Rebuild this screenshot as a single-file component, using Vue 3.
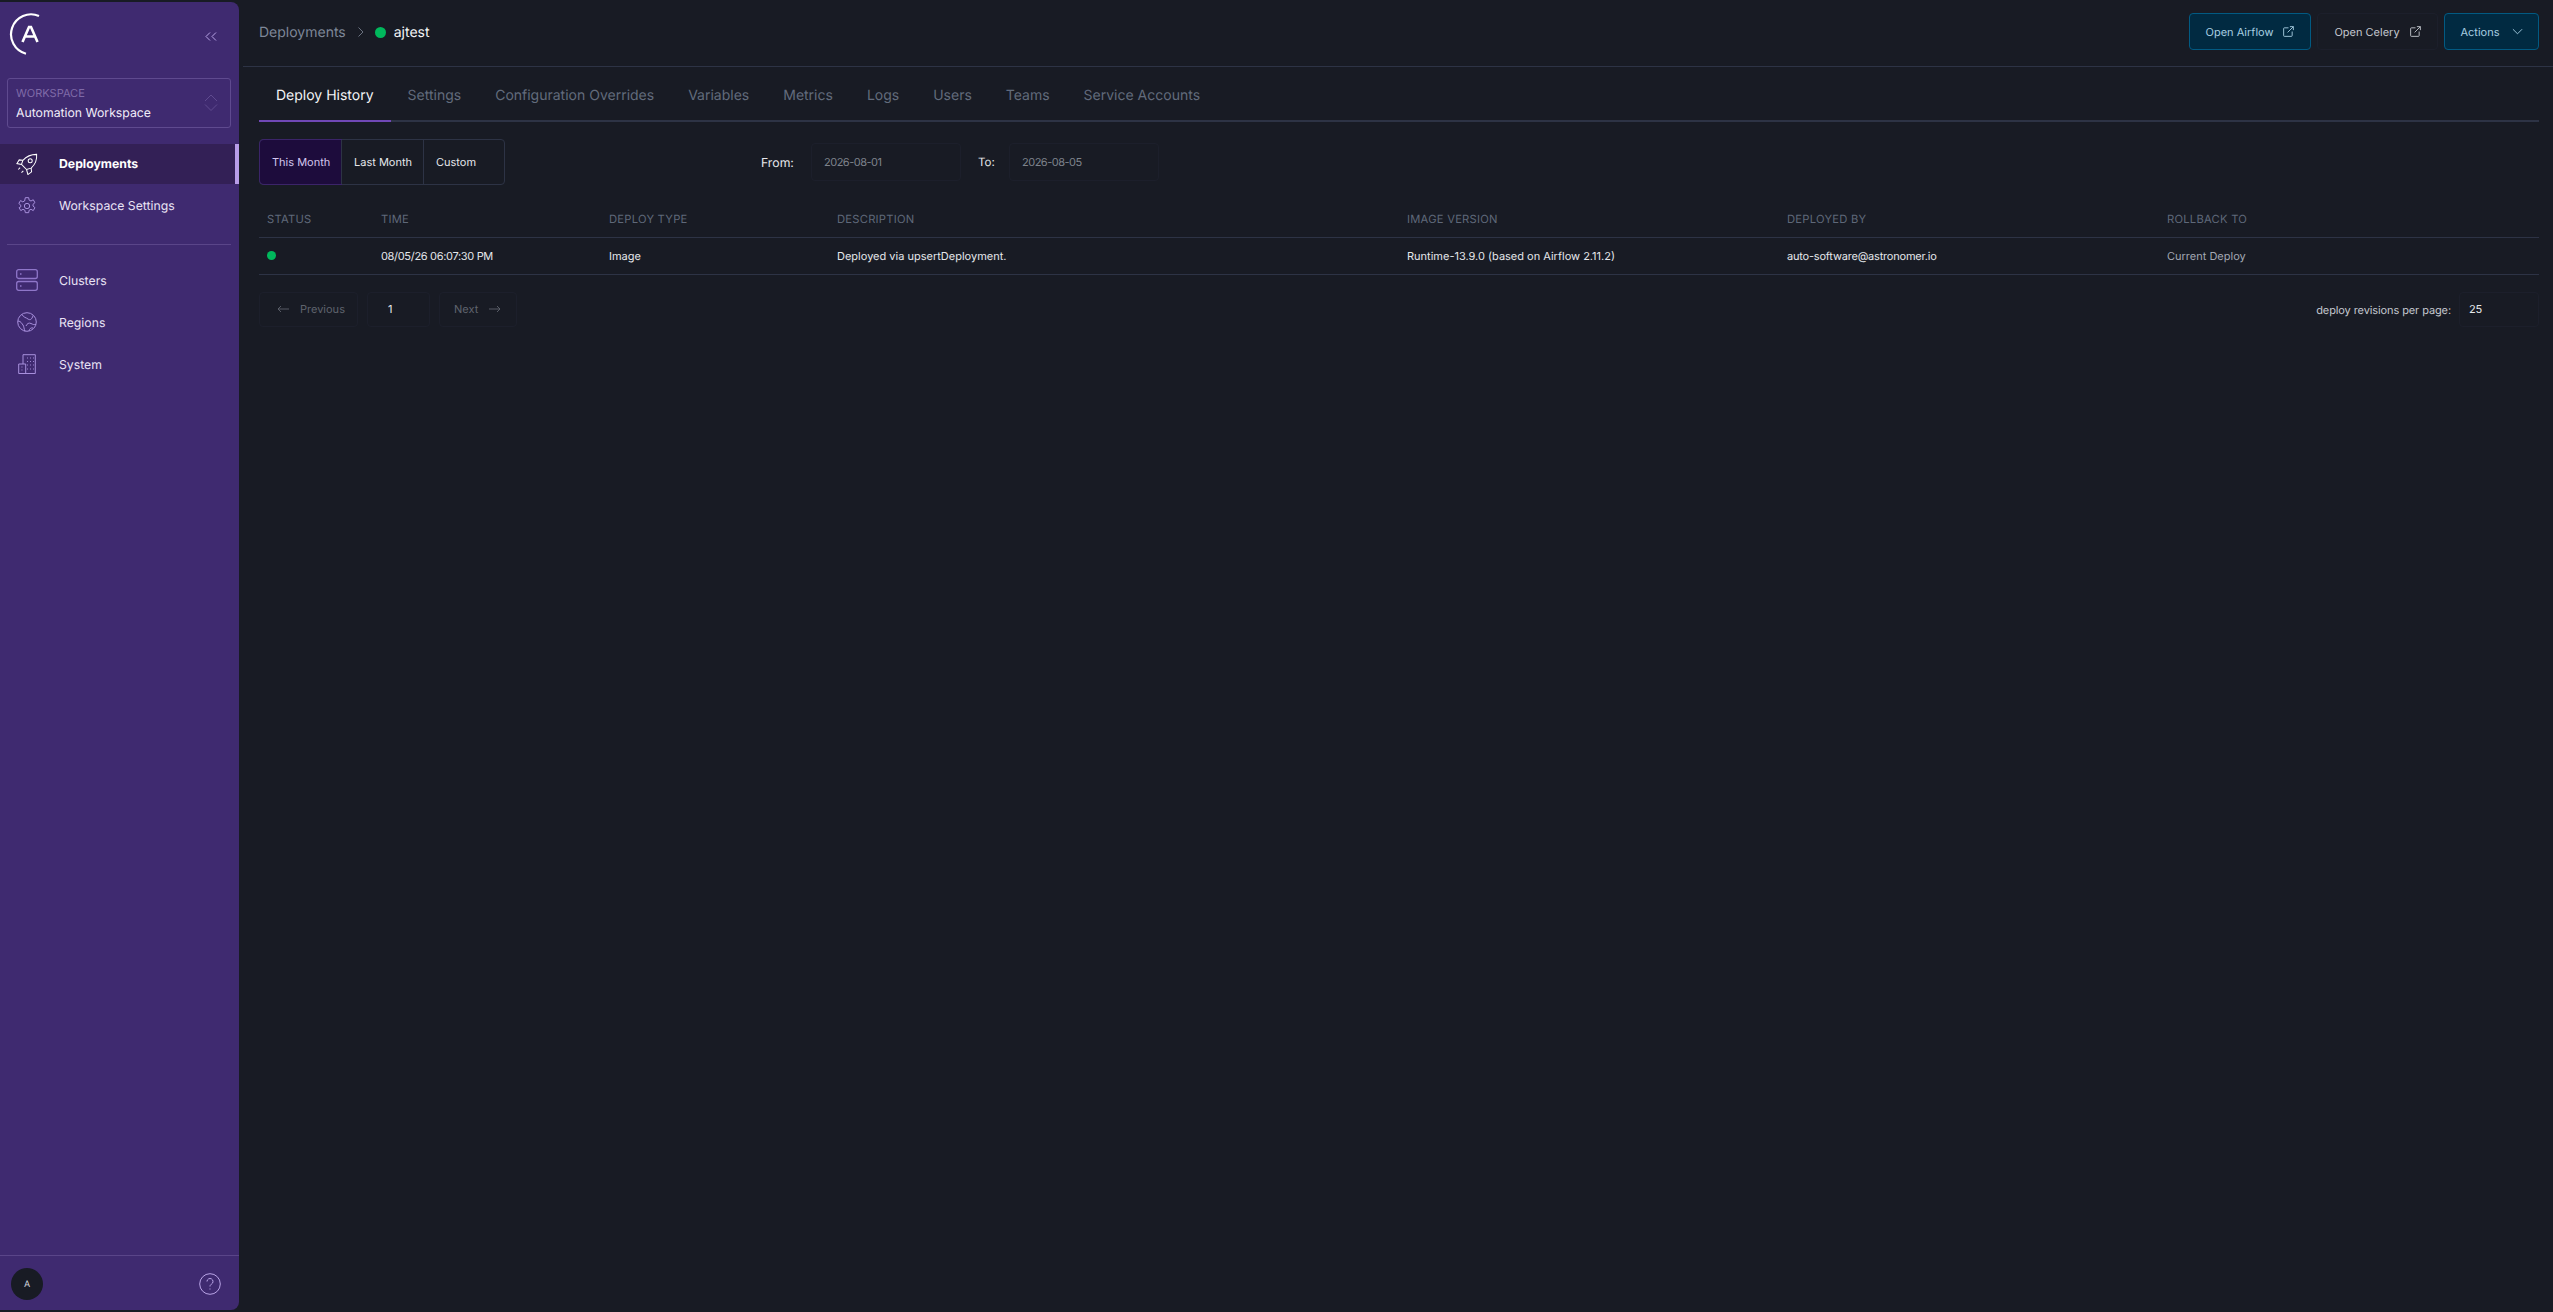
<script setup>
const nav1 = [
  { label: 'Deployments', icon: 'rocket', active: true },
  { label: 'Workspace Settings', icon: 'gear' },
]
const nav2 = [
  { label: 'Clusters', icon: 'server' },
  { label: 'Regions', icon: 'globe' },
  { label: 'System', icon: 'building' },
]
const tabs = ['Deploy History', 'Settings', 'Configuration Overrides', 'Variables', 'Metrics', 'Logs', 'Users', 'Teams', 'Service Accounts']
const headers = ['STATUS', 'TIME', 'DEPLOY TYPE', 'DESCRIPTION', 'IMAGE VERSION', 'DEPLOYED BY', 'ROLLBACK TO']
</script>

<template>
  <div class="page">
    <aside class="sidebar">
      <div class="brand">
        <svg class="logo" viewBox="0 0 34 46" width="34" height="46">
          <path d="M30 4A20 20 0 1 0 17 41.700" fill="none" stroke="#fff" stroke-width="2.200" />
          <path d="M13.500 30 20 15h2L28.500 30M16 24.500h10" fill="none" stroke="#fff" stroke-width="2.600" />
        </svg>
        <svg class="collapse" viewBox="0 0 12 9" width="12" height="9">
          <path d="M5 .5 1 4.500 5 8.500M11 .5 7 4.500 11 8.500" fill="none" stroke="#b9a4e6" stroke-width="1" />
        </svg>
      </div>
      <div class="workspace">
        <div>
          <div class="ws-label">WORKSPACE</div>
          <div class="ws-name">Automation Workspace</div>
        </div>
        <svg viewBox="0 0 14 18" width="14" height="18">
          <path d="M1 7 7 1l6 6M1 10.500l6 6 6-6" fill="none" stroke="#5f4a8f" stroke-width="1" />
        </svg>
      </div>
      <nav class="nav first">
        <a v-for="n in nav1" :key="n.label" class="nav-item" :class="{ active: n.active }">
          <span class="nav-icon">
            <svg v-if="n.icon === 'rocket'" viewBox="0 0 24 24" width="22" height="22" fill="none" stroke="#fff" stroke-width="1.100">
              <path d="M7.500 8C11.500 3.500 17 1.500 22.500 1.500c.5 5.500-1.500 11-6 15L11.500 18 6 12.500z" />
              <circle cx="15.500" cy="8.500" r="2.200" />
              <path d="M7.500 8 3.500 7.500 1 11.500l5 1M16.500 16.500 17 20.500l-4 3-1.500-5.500M4.500 16 2.500 18M8 19.500l-2 2" />
            </svg>
            <svg v-else viewBox="0 0 24 24" width="20" height="20" fill="none" stroke="#a78fdc" stroke-width="1.200">
              <circle cx="12" cy="12" r="3.200" />
              <path d="M10 2h4l.6 3 2.200 1 2.700-1.500 2 3.500-2.300 2v2l2.300 2-2 3.500-2.700-1.500-2.200 1-.6 3h-4l-.6-3-2.200-1-2.700 1.500-2-3.500L4.500 13v-2L2.200 9l2-3.500L6.900 7l2.200-1z" stroke-linejoin="round" />
            </svg>
          </span>
          {{ n.label }}
        </a>
      </nav>
      <hr class="divider" />
      <nav class="nav">
        <a v-for="n in nav2" :key="n.label" class="nav-item">
          <span class="nav-icon">
            <svg v-if="n.icon === 'server'" viewBox="0 0 22 22" width="22" height="22" fill="none" stroke="#8f76c9" stroke-width="1.300">
              <rect x=".7" y=".7" width="20.600" height="8.800" rx="2" />
              <rect x=".7" y="12.500" width="20.600" height="8.800" rx="2" />
              <path d="M4 5h1.500M4 17h1.500" />
            </svg>
            <svg v-else-if="n.icon === 'globe'" viewBox="0 0 20 20" width="20" height="20" fill="none" stroke="#a78fdc" stroke-width="1">
              <circle cx="10" cy="10" r="9.300" />
              <path d="M5 2.500c1.500 3 4 3 6 4.500s4 .5 5-3.500M1 9c3 0 4 3 5 4s1 4.500 2 6.500M9 14c1-2.500 3-3.500 5-2.500s3.500 1.500 5 1M12 19c.5-2.500 2-3.500 4-3" />
            </svg>
            <svg v-else viewBox="0 0 18 20" width="18" height="20" fill="none" stroke="#a78fdc" stroke-width="1">
              <path d="M5 10V.7h12.300V19.500H.7V10h7v9.500" />
              <path d="M9 4h.9M12 4h.9M15 4h.9M9 7.500h.9M12 7.500h.9M15 7.500h.9M9 11h.9M12 11h.9M15 11h.9M9 15h.9M12 15h.9M15 15h.9M3.500 13h.9M3.500 16h.9" stroke-width="1.200" />
            </svg>
          </span>
          {{ n.label }}
        </a>
      </nav>
      <div class="side-foot">
        <div class="avatar">A</div>
        <svg viewBox="0 0 22 22" width="22" height="22" fill="none" stroke="#b9a4e6" stroke-width="1">
          <circle cx="11" cy="11" r="10.300" />
          <path d="M8 8.500a3 3 0 1 1 4.500 2.600c-1 .6-1.500 1.200-1.500 2.400M11 15.500v1" />
        </svg>
      </div>
    </aside>

    <main class="main">
      <header class="topbar">
        <div class="crumbs">
          <span class="crumb">Deployments</span>
          <svg viewBox="0 0 6 10" width="6" height="10"><path d="M.5.500 5 5 .5 9.500" fill="none" stroke="#6b7280" stroke-width="1" /></svg>
          <span class="dot big"></span>
          <span class="current">ajtest</span>
        </div>
        <div class="actions">
          <button class="btn primary">Open Airflow
            <svg viewBox="0 0 12 12" width="11" height="11"><path d="M6 2H1.500A.8.800 0 0 0 .7 2.800v7.700a.8.800 0 0 0 .8.800h7.700a.8.800 0 0 0 .8-.8V6M5 7l6.300-6.300M7.500.7h3.800v3.800" fill="none" stroke="currentColor" /></svg>
          </button>
          <button class="btn celery">Open Celery
            <svg viewBox="0 0 12 12" width="11" height="11"><path d="M6 2H1.500A.8.800 0 0 0 .7 2.800v7.700a.8.800 0 0 0 .8.800h7.700a.8.800 0 0 0 .8-.8V6M5 7l6.300-6.300M7.500.7h3.800v3.800" fill="none" stroke="currentColor" /></svg>
          </button>
          <button class="btn primary act">Actions
            <svg viewBox="0 0 12 7" width="11" height="7"><path d="M1 1l5 5 5-5" fill="none" stroke="currentColor" /></svg>
          </button>
        </div>
      </header>

      <div class="content">
        <div class="tabs">
          <a v-for="(t, i) in tabs" :key="t" class="tab" :class="{ on: i === 0 }">{{ t }}</a>
        </div>

        <div class="filters">
          <div class="seg">
            <span class="seg-item sel">This Month</span>
            <span class="seg-item">Last Month</span>
            <span class="seg-item">Custom</span>
          </div>
          <label class="from">From:</label>
          <div class="date">2026-08-01</div>
          <label class="to">To:</label>
          <div class="date">2026-08-05</div>
        </div>

        <div class="grid head">
          <div v-for="h in headers" :key="h">{{ h }}</div>
        </div>
        <div class="grid row">
          <div><span class="dot"></span></div>
          <div class="time">08/05/26 06:07:30 PM</div>
          <div>Image</div>
          <div>Deployed via upsertDeployment.</div>
          <div>Runtime-13.9.0 (based on Airflow 2.11.2)</div>
          <div class="email">auto-software@astronomer.io</div>
          <div class="muted">Current Deploy</div>
        </div>

        <div class="pager">
          <div class="pager-left">
            <div class="pg prev">
              <svg viewBox="0 0 12 8" width="12" height="8"><path d="M12 4H1M4 1 1 4l3 3" fill="none" stroke="currentColor" stroke-width=".9" /></svg>
              Previous
            </div>
            <div class="pg num">1</div>
            <div class="pg next">Next
              <svg viewBox="0 0 12 8" width="12" height="8"><path d="M0 4h11M8 1l3 3-3 3" fill="none" stroke="currentColor" stroke-width=".9" /></svg>
            </div>
          </div>
          <div class="pager-right">
            <span>deploy revisions per page:</span>
            <div class="pg size">25</div>
          </div>
        </div>
      </div>
    </main>
  </div>
</template>

<style>
html, body { margin: 0; background: #181b24; }
</style>

<style scoped>
.page {
  display: flex;
  height: 1312px;
  font-family: Inter, "Liberation Sans", sans-serif;
  text-rendering: geometricPrecision;
  color: #e5e7eb;
  background: #181b24;
  overflow: hidden;
}
.sidebar {
  width: 239px;
  flex: none;
  margin: 2px 0;
  background: #3f2a70;
  border-radius: 0 8px 8px 0;
  display: flex;
  flex-direction: column;
  box-sizing: border-box;
}
.brand {
  display: flex;
  align-items: flex-start;
  justify-content: space-between;
  height: 76px;
  padding: 10px 22px 0 9px;
  box-sizing: border-box;
}
.logo { display: block; }
.collapse { margin-top: 20px; }
.workspace {
  margin: 0 8px 16px 7px;
  height: 50px;
  box-sizing: border-box;
  border: 1px solid #5f4a8f;
  border-radius: 3px;
  display: flex;
  align-items: center;
  justify-content: space-between;
  padding: 0 12px 0 8px;
}
.ws-label { font-size: 11px; line-height: 14px; color: #7f6aa8; }
.ws-name { font-size: 12.250px; line-height: 16px; color: #f1edf9; margin-top: 5px; }
.nav { display: flex; flex-direction: column; gap: 2px; }
.nav-item {
  display: flex;
  align-items: center;
  height: 40px;
  font-size: 12.250px;
  color: #e9e3f5;
  box-sizing: border-box;
}
.first .nav-item { padding-bottom: 1px; }
.nav-icon {
  width: 59px;
  flex: none;
  display: flex;
  justify-content: center;
  padding-right: 6px;
  box-sizing: border-box;
}
.nav-item.active {
  background: #332056;
  color: #fff;
  font-weight: 700;
  border-right: 4px solid #b79ce8;
}
.divider {
  border: 0;
  border-top: 1px solid #5a4589;
  margin: 18px 8px 15px 7px;
  height: 0;
  align-self: stretch;
}
.side-foot {
  margin-top: auto;
  border-top: 1px solid #5a4589;
  height: 55px;
  box-sizing: border-box;
  display: flex;
  align-items: center;
  justify-content: space-between;
  padding: 2px 18px 0 11px;
}
.avatar {
  width: 32px;
  height: 32px;
  border-radius: 50%;
  background: #181b24;
  color: #d1d5db;
  font-size: 9px;
  display: flex;
  align-items: center;
  justify-content: center;
}
.main { flex: 1; min-width: 0; padding-left: 4px; }
.topbar {
  height: 66px;
  border-bottom: 1px solid #2d3345;
  box-sizing: content-box;
  display: flex;
  align-items: flex-start;
  justify-content: space-between;
  padding: 0 14px 0 16px;
}
.crumbs { display: flex; align-items: center; font-size: 14px; height: 64px; }
.crumb { color: #7e8798; margin-right: 12px; }
.crumbs svg { margin-right: 11px; }
.dot {
  display: inline-block;
  width: 9px;
  height: 9px;
  border-radius: 50%;
  background: #00b85c;
}
.dot.big { width: 11px; height: 11px; margin-right: 8px; }
.current { color: #f3f4f6; }
.actions { display: flex; gap: 6px; margin-top: 13px; }
.btn {
  height: 37px;
  width: 122px;
  border: 1px solid #1c1f2b;
  border-radius: 4px;
  background: #181b24;
  color: #c4c8cf;
  font: 400 11px Inter, "Liberation Sans", sans-serif;
  text-rendering: geometricPrecision;
  display: flex;
  align-items: center;
  justify-content: center;
  gap: 10px;
  padding: 0;
}
.btn.celery { width: 121px; }
.btn.primary { background: #012a41; border-color: #025a82; color: #a8cfe2; }
.btn.act { width: 95px; gap: 12px; }
.content { padding: 0 14px 0 16px; }
.tabs {
  display: flex;
  height: 55px;
  border-bottom: 2px solid #2d3345;
  box-sizing: border-box;
}
.tab {
  padding: 3px 17px 0;
  font-size: 14px;
  color: #626b7c;
  display: flex;
  align-items: center;
  margin-bottom: -2px;
  border-bottom: 2px solid transparent;
  box-sizing: border-box;
}
.tab.on { color: #f3f4f6; border-bottom-color: #7048b6; }
.filters {
  display: flex;
  align-items: center;
  margin-top: 17px;
  height: 46px;
}
.seg {
  display: flex;
  border: 1px solid #2d3345;
  border-radius: 4px;
  height: 46px;
  width: 246px;
  box-sizing: border-box;
}
.seg-item {
  width: 82px;
  box-sizing: border-box;
  padding-left: 12px;
  font-size: 11px;
  color: #e5e7eb;
  display: flex;
  align-items: center;
  border-left: 1px solid #2d3345;
}
.seg-item:first-child { border-left: 0; width: 81px; }
.seg-item:last-child { width: 81px; }
.seg-item.sel {
  background: #1d0c3c;
  color: #d3c5ee;
  box-shadow: 0 0 0 1px #3b2469;
  border-radius: 4px 0 0 4px;
}
.from { margin-left: 256px; font-size: 12.250px; color: #e5e7eb; width: 50px; }
.to { margin-left: 17px; font-size: 11.500px; color: #e5e7eb; width: 31px; }
.date {
  width: 150px;
  height: 38px;
  box-sizing: border-box;
  border: 1px solid #1c1f2b;
  border-radius: 4px;
  color: #7e838c;
  font-size: 11px;
  letter-spacing: -.5px;
  padding-left: 12px;
  display: flex;
  align-items: center;
}
.grid {
  display: grid;
  grid-template-columns: 114px 228px 228px 570px 380px 380px 380px;
  align-items: center;
}
.grid > div { padding-left: 8px; }
.head {
  margin-top: 15px;
  height: 38px;
  font-size: 11.200px;
  letter-spacing: .25px;
  color: #5f6879;
  border-bottom: 1px solid #2d3345;
  box-sizing: border-box;
}
.row {
  height: 37px;
  font-size: 11px;
  color: #e5e7eb;
  border-bottom: 1px solid #2d3345;
  box-sizing: border-box;
}
.row .dot { display: block; margin-bottom: 2px; }
.time { letter-spacing: -.32px; }
.email { letter-spacing: -.2px; }
.muted { color: #a3a8b3; }
.pager {
  display: flex;
  justify-content: space-between;
  align-items: center;
  margin-top: 17px;
}
.pager-left { display: flex; gap: 9px; }
.pg {
  height: 35px;
  box-sizing: border-box;
  border: 1px solid #1c1f2b;
  border-radius: 4px;
  display: flex;
  align-items: center;
  font-size: 11px;
  padding-bottom: 1px;
}
.prev, .next { color: #5f636d; gap: 11px; }
.prev { width: 99px; padding-left: 17px; }
.next { width: 78px; padding-left: 14px; }
.num { width: 63px; padding-left: 20px; color: #e5e7eb; }
.pager-right { display: flex; align-items: center; gap: 8px; font-size: 11px; letter-spacing: -.1px; color: #c4c8cf; }
.size { width: 80px; padding-left: 9px; color: #e5e7eb; }
</style>
